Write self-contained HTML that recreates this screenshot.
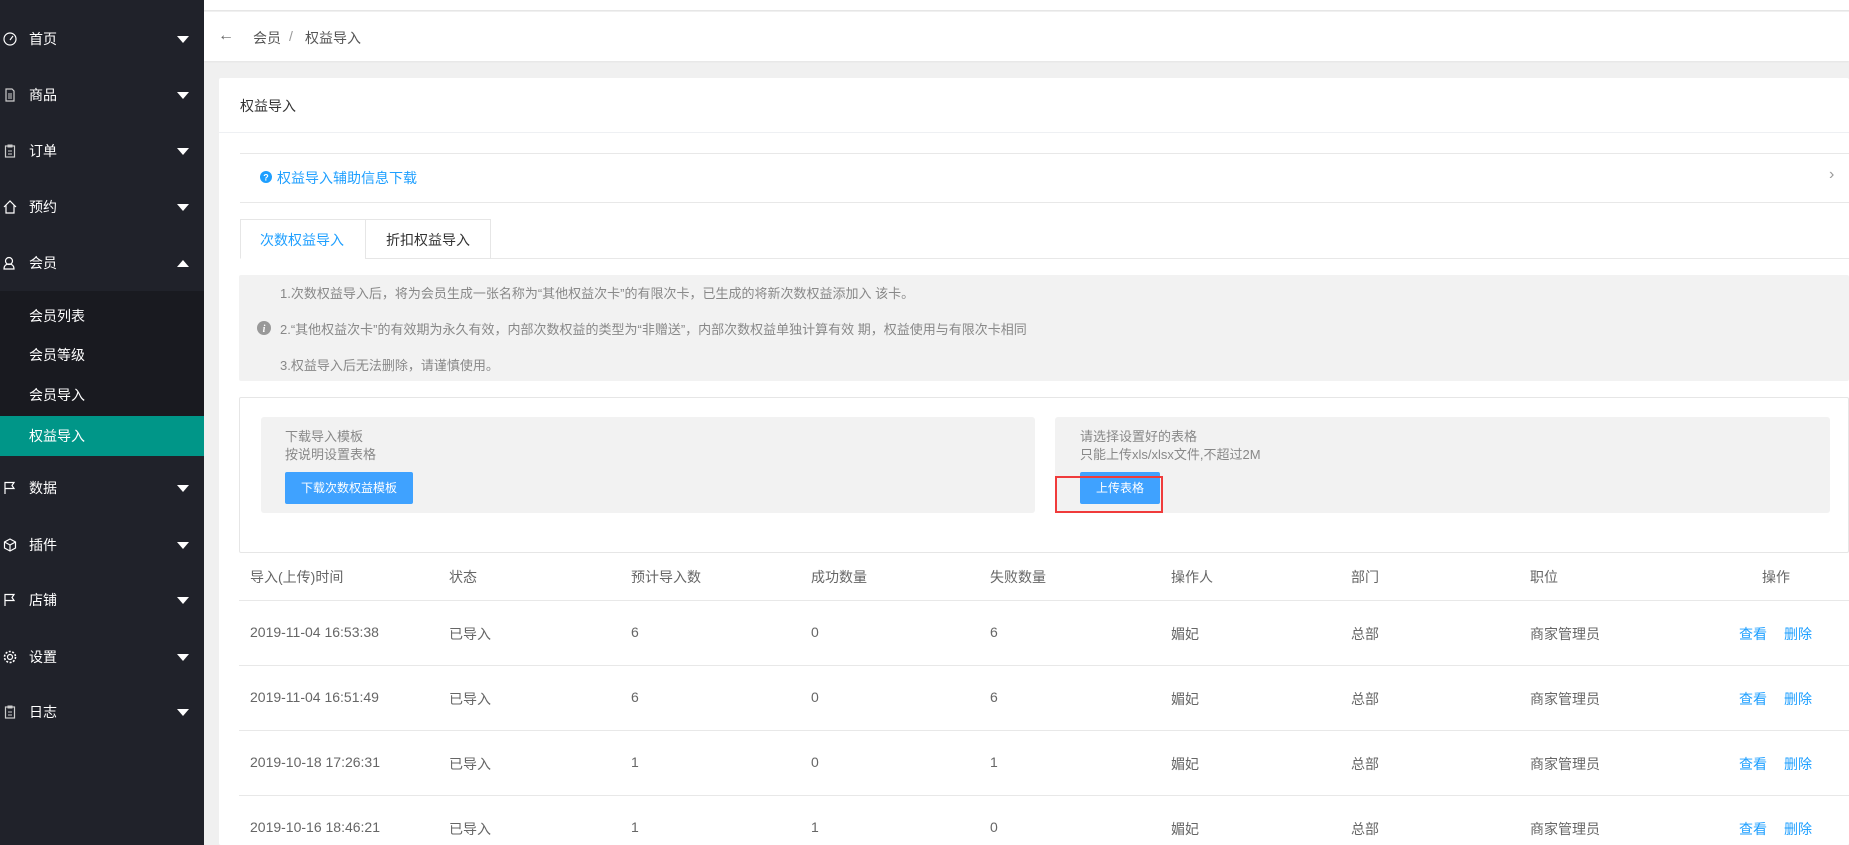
<!DOCTYPE html>
<html><head><meta charset="utf-8"><style>
*{box-sizing:border-box;margin:0;padding:0}
body{width:1849px;height:845px;overflow:hidden;background:#f0f0f0;font-family:"Liberation Sans","Noto Sans CJK SC",sans-serif;font-size:14px;color:#666;position:relative}
.a{position:absolute;white-space:nowrap}
#side{position:absolute;left:0;top:0;width:204px;height:845px;background:#20222a}
.mi{position:absolute;left:0;width:204px;height:56px;color:#fff;font-size:14px}
.mi span.t{position:absolute;left:29px;top:50%;transform:translateY(-50%)}
.mi .ar{position:absolute;left:177px;top:50%;margin-top:-3px;width:0;height:0;border-left:6px solid transparent;border-right:6px solid transparent;border-top:7px solid #fff}
.mi .ar.up{border-top:0;border-bottom:7px solid #fff}
.mi svg{position:absolute;left:3px;top:50%;margin-top:-7px}
.sub{position:absolute;left:0;width:204px;height:40px;color:#fff;font-size:14px}
.sub span{position:absolute;left:29px;top:50%;transform:translateY(-50%)}
.line{position:absolute;background:#e8e8e8;height:1px}
.th{color:#666;font-size:14px}
.td{color:#666;font-size:14px}
.lk{color:#1e9fff}
</style></head><body>
<div id="side">
 <div class="mi" style="top:11px"><svg width="14" height="14" viewBox="0 0 14 14"><circle cx="7" cy="7" r="6" fill="none" stroke="#fff" stroke-width="1.2"/><path d="M7 8L10 4" stroke="#fff" stroke-width="1.2"/></svg><span class="t">首页</span><i class="ar"></i></div>
 <div class="mi" style="top:67px"><svg width="14" height="14" viewBox="0 0 14 14"><path d="M3 1h6l2 2v10H3z" fill="none" stroke="#ccc" stroke-width="1.2"/><path d="M5 6h4M5 8h4M5 10h4" stroke="#ccc"/></svg><span class="t">商品</span><i class="ar"></i></div>
 <div class="mi" style="top:123px"><svg width="14" height="14" viewBox="0 0 14 14"><rect x="2.5" y="2" width="9" height="11" fill="none" stroke="#ccc" stroke-width="1.2"/><path d="M5 1h4v2H5zM5 7h4M5 10h4" stroke="#ccc" fill="none"/></svg><span class="t">订单</span><i class="ar"></i></div>
 <div class="mi" style="top:179px"><svg width="14" height="14" viewBox="0 0 14 14"><path d="M1 7L7 1l6 6M3 5v8h8V5" fill="none" stroke="#fff" stroke-width="1.2"/></svg><span class="t">预约</span><i class="ar"></i></div>
 <div class="mi" style="top:235px"><svg width="14" height="14" viewBox="0 0 14 14"><circle cx="6" cy="5" r="3.5" fill="none" stroke="#fff" stroke-width="1.2"/><path d="M1 13c0-4 3-5 5-5s5 1 5 5z" fill="none" stroke="#fff" stroke-width="1.2"/></svg><span class="t">会员</span><i class="ar up"></i></div>
 <div style="position:absolute;top:291px;left:0;width:204px;height:125px;background:#191a20"></div>
 <div class="sub" style="top:296px"><span>会员列表</span></div>
 <div class="sub" style="top:335px"><span>会员等级</span></div>
 <div class="sub" style="top:375px"><span>会员导入</span></div>
 <div class="sub" style="top:416px;background:#009688;height:40px"><span>权益导入</span></div>
 <div class="mi" style="top:460px"><svg width="14" height="14" viewBox="0 0 14 14"><path d="M2 13V1.5h9l-2 3 2 3H2" fill="none" stroke="#fff" stroke-width="1.2"/></svg><span class="t">数据</span><i class="ar"></i></div>
 <div class="mi" style="top:517px"><svg width="14" height="14" viewBox="0 0 14 14"><path d="M7 1l5.5 3v6L7 13 1.5 10V4zM1.5 4L7 7l5.5-3M7 7v6" fill="none" stroke="#fff" stroke-width="1.2"/></svg><span class="t">插件</span><i class="ar"></i></div>
 <div class="mi" style="top:572px"><svg width="14" height="14" viewBox="0 0 14 14"><path d="M2 13V1.5h9l-2 3 2 3H2" fill="none" stroke="#fff" stroke-width="1.2"/></svg><span class="t">店铺</span><i class="ar"></i></div>
 <div class="mi" style="top:629px"><svg width="14" height="14" viewBox="0 0 14 14"><circle cx="7" cy="7" r="2.5" fill="none" stroke="#fff" stroke-width="1.2"/><circle cx="7" cy="7" r="5.5" fill="none" stroke="#fff" stroke-width="1.6" stroke-dasharray="2 1.5"/></svg><span class="t">设置</span><i class="ar"></i></div>
 <div class="mi" style="top:684px"><svg width="14" height="14" viewBox="0 0 14 14"><rect x="2.5" y="2" width="9" height="11" fill="none" stroke="#ccc" stroke-width="1.2"/><path d="M5 1h4v2H5zM5 7h4M5 10h4" stroke="#ccc" fill="none"/></svg><span class="t">日志</span><i class="ar"></i></div>
</div>

<div class="a" style="left:204px;top:0;width:1645px;height:11px;background:#fff;border-bottom:1px solid #e6e6e6"></div>
<div class="a" style="left:204px;top:12px;width:1645px;height:49px;background:#fff;box-shadow:0 1px 2px rgba(0,0,0,.05)"></div>
<div class="a" style="left:218px;top:27px;color:#666;font-size:16px">&#8592;</div>
<div class="a" style="left:253px;top:28px;color:#555">会员</div>
<div class="a" style="left:289px;top:28px;color:#999">/</div>
<div class="a" style="left:305px;top:28px;color:#555">权益导入</div>

<div class="a" style="left:219px;top:78px;width:1630px;height:767px;background:#fff;border-radius:2px"></div>
<div class="a" style="left:240px;top:96px;color:#333">权益导入</div>
<div class="line" style="left:219px;top:132px;width:1630px;background:#eef0f3"></div>

<div class="line" style="left:240px;top:153px;width:1609px"></div>
<div class="line" style="left:240px;top:202px;width:1609px"></div>
<svg class="a" style="left:260px;top:171px" width="12" height="12" viewBox="0 0 12 12"><circle cx="6" cy="6" r="6" fill="#1e9fff"/><text x="6" y="9.5" font-size="9" fill="#fff" text-anchor="middle" font-family="Liberation Sans" font-weight="bold">?</text></svg>
<div class="a lk" style="left:277px;top:168px">权益导入辅助信息下载</div>
<div class="a" style="left:1829px;top:166px;color:#999;font-size:16px">&#8250;</div>

<div class="line" style="left:240px;top:258px;width:1609px"></div>
<div class="a" style="left:240px;top:219px;width:126px;height:40px;background:#fff;border:1px solid #e6e6e6;border-bottom-color:#fff"></div>
<div class="a" style="left:365px;top:219px;width:126px;height:40px;background:#fff;border:1px solid #e6e6e6"></div>
<div class="a lk" style="left:260px;top:230px">次数权益导入</div>
<div class="a" style="left:386px;top:230px;color:#333">折扣权益导入</div>

<div class="a" style="left:239px;top:275px;width:1610px;height:106px;background:#f2f2f2;border-radius:2px"></div>
<div class="a" style="left:280px;top:283px;color:#888;font-size:13px">1.次数权益导入后，将为会员生成一张名称为“其他权益次卡”的有限次卡，已生成的将新次数权益添加入 该卡。</div>
<div class="a" style="left:280px;top:319px;color:#888;font-size:13px">2.“其他权益次卡”的有效期为永久有效，内部次数权益的类型为“非赠送”，内部次数权益单独计算有效 期，权益使用与有限次卡相同</div>
<div class="a" style="left:280px;top:355px;color:#888;font-size:13px">3.权益导入后无法删除，请谨慎使用。</div>
<svg class="a" style="left:257px;top:321px" width="14" height="14" viewBox="0 0 14 14"><circle cx="7" cy="7" r="7" fill="#999"/><text x="7" y="11" font-size="10" fill="#fff" text-anchor="middle" font-family="Liberation Serif" font-style="italic" font-weight="bold">i</text></svg>

<div class="a" style="left:239px;top:397px;width:1610px;height:156px;border:1px solid #e6e6e6;border-radius:2px"></div>
<div class="a" style="left:261px;top:417px;width:774px;height:96px;background:#f2f2f2;border-radius:3px"></div>
<div class="a" style="left:285px;top:426px;color:#888;font-size:13px">下载导入模板</div>
<div class="a" style="left:285px;top:444px;color:#888;font-size:13px">按说明设置表格</div>
<div class="a" style="left:285px;top:472px;width:128px;height:32px;background:#3fa2ff;border-radius:2px;color:#fff;font-size:12px;line-height:32px;text-align:center">下载次数权益模板</div>
<div class="a" style="left:1055px;top:417px;width:775px;height:96px;background:#f2f2f2;border-radius:3px"></div>
<div class="a" style="left:1080px;top:426px;color:#888;font-size:13px">请选择设置好的表格</div>
<div class="a" style="left:1080px;top:444px;color:#888;font-size:13px">只能上传xls/xlsx文件,不超过2M</div>
<div class="a" style="left:1080px;top:472px;width:80px;height:32px;background:#3fa2ff;border-radius:2px;color:#fff;font-size:12px;line-height:32px;text-align:center">上传表格</div>
<div class="a" style="left:1055px;top:476px;width:108px;height:37px;border:2px solid #f03b3b"></div>

<div class="a th" style="left:250px;top:567px">导入(上传)时间</div>
<div class="a th" style="left:449px;top:567px">状态</div>
<div class="a th" style="left:631px;top:567px">预计导入数</div>
<div class="a th" style="left:811px;top:567px">成功数量</div>
<div class="a th" style="left:990px;top:567px">失败数量</div>
<div class="a th" style="left:1171px;top:567px">操作人</div>
<div class="a th" style="left:1351px;top:567px">部门</div>
<div class="a th" style="left:1530px;top:567px">职位</div>
<div class="a th" style="left:1762px;top:567px">操作</div>
<div class="line" style="left:239px;top:600px;width:1610px"></div>
<div class="line" style="left:239px;top:665px;width:1610px"></div>
<div class="line" style="left:239px;top:730px;width:1610px"></div>
<div class="line" style="left:239px;top:795px;width:1610px"></div>

<div class="a td" style="left:250px;top:624px">2019-11-04 16:53:38</div><div class="a td" style="left:449px;top:624px">已导入</div><div class="a td" style="left:631px;top:624px">6</div><div class="a td" style="left:811px;top:624px">0</div><div class="a td" style="left:990px;top:624px">6</div><div class="a td" style="left:1171px;top:624px">媚妃</div><div class="a td" style="left:1351px;top:624px">总部</div><div class="a td" style="left:1530px;top:624px">商家管理员</div><div class="a lk" style="left:1739px;top:624px">查看</div><div class="a lk" style="left:1784px;top:624px">删除</div>

<div class="a td" style="left:250px;top:689px">2019-11-04 16:51:49</div><div class="a td" style="left:449px;top:689px">已导入</div><div class="a td" style="left:631px;top:689px">6</div><div class="a td" style="left:811px;top:689px">0</div><div class="a td" style="left:990px;top:689px">6</div><div class="a td" style="left:1171px;top:689px">媚妃</div><div class="a td" style="left:1351px;top:689px">总部</div><div class="a td" style="left:1530px;top:689px">商家管理员</div><div class="a lk" style="left:1739px;top:689px">查看</div><div class="a lk" style="left:1784px;top:689px">删除</div>

<div class="a td" style="left:250px;top:754px">2019-10-18 17:26:31</div><div class="a td" style="left:449px;top:754px">已导入</div><div class="a td" style="left:631px;top:754px">1</div><div class="a td" style="left:811px;top:754px">0</div><div class="a td" style="left:990px;top:754px">1</div><div class="a td" style="left:1171px;top:754px">媚妃</div><div class="a td" style="left:1351px;top:754px">总部</div><div class="a td" style="left:1530px;top:754px">商家管理员</div><div class="a lk" style="left:1739px;top:754px">查看</div><div class="a lk" style="left:1784px;top:754px">删除</div>

<div class="a td" style="left:250px;top:819px">2019-10-16 18:46:21</div><div class="a td" style="left:449px;top:819px">已导入</div><div class="a td" style="left:631px;top:819px">1</div><div class="a td" style="left:811px;top:819px">1</div><div class="a td" style="left:990px;top:819px">0</div><div class="a td" style="left:1171px;top:819px">媚妃</div><div class="a td" style="left:1351px;top:819px">总部</div><div class="a td" style="left:1530px;top:819px">商家管理员</div><div class="a lk" style="left:1739px;top:819px">查看</div><div class="a lk" style="left:1784px;top:819px">删除</div>
</body></html>
